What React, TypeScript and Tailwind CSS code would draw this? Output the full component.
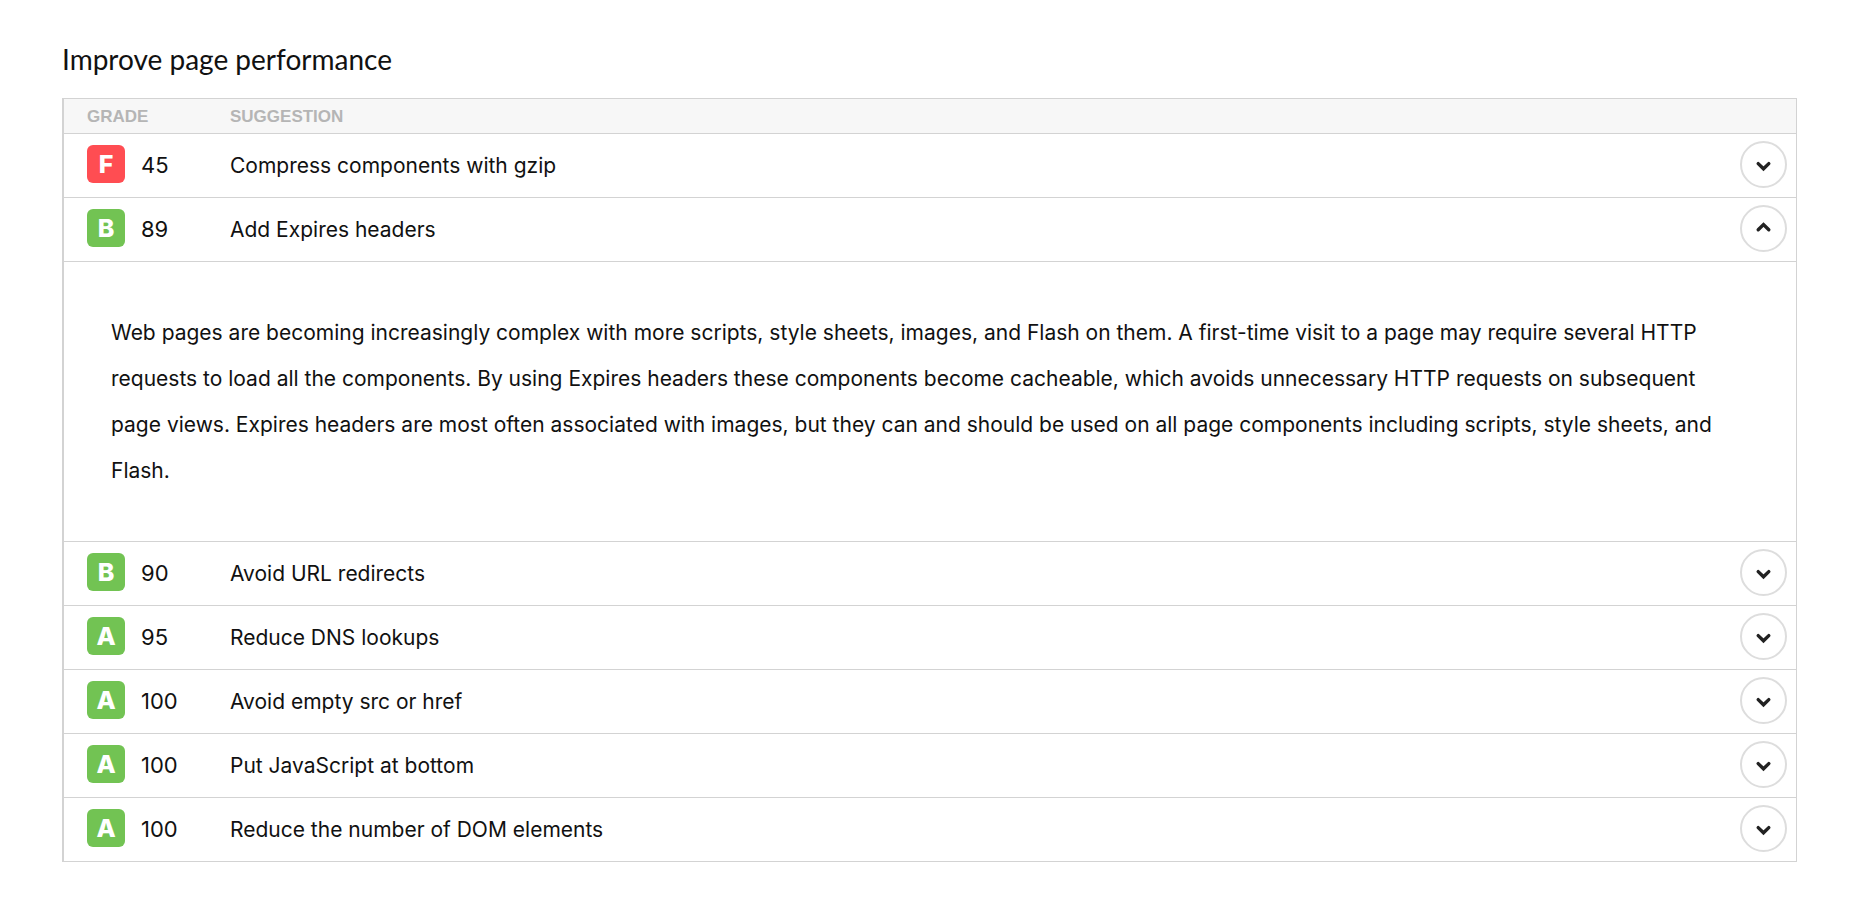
import { Fragment, useState } from "react";

const suggestions = [
  { grade: "F", score: 45, title: "Compress components with gzip" },
  {
    grade: "B",
    score: 89,
    title: "Add Expires headers",
    details:
      "Web pages are becoming increasingly complex with more scripts, style sheets, images, and Flash on them. A first-time visit to a page may require several HTTP requests to load all the components. By using Expires headers these components become cacheable, which avoids unnecessary HTTP requests on subsequent page views. Expires headers are most often associated with images, but they can and should be used on all page components including scripts, style sheets, and Flash.",
  },
  { grade: "B", score: 90, title: "Avoid URL redirects" },
  { grade: "A", score: 95, title: "Reduce DNS lookups" },
  { grade: "A", score: 100, title: "Avoid empty src or href" },
  { grade: "A", score: 100, title: "Put JavaScript at bottom" },
  { grade: "A", score: 100, title: "Reduce the number of DOM elements" },
];

function Chevron({ up }: { up: boolean }) {
  return (
    <svg
      className="size-5"
      viewBox="0 0 20 20"
      fill="none"
      stroke="#222222"
      strokeWidth="3.4"
      strokeLinecap="round"
      aria-hidden
    >
      <path d={up ? "M4.2 10.8 L9.5 5.6 L14.8 10.8" : "M4.2 8.6 L9.5 13.8 L14.8 8.6"} />
    </svg>
  );
}

function GradeBadge({ grade }: { grade: string }) {
  return (
    <span
      className={`flex size-[38px] items-center justify-center rounded-md pt-0.5 text-[25px] font-extrabold leading-none text-white ${
        grade === "F" ? "bg-[#ff4d52]" : "bg-[#72c353]"
      }`}
    >
      {grade}
    </span>
  );
}

export default function App() {
  const [openRow, setOpenRow] = useState<number | null>(1);

  return (
    <main className="min-h-screen bg-white pt-[39px] pr-[53px] pb-12 pl-[62px] font-['Inter',sans-serif] text-[#111111]">
      <h1 className="font-['Lato',sans-serif] text-[28px] leading-10">Improve page performance</h1>

      <table className="mt-[19px] w-full border-separate border-spacing-0 border-t border-r border-l-2 border-[#d3d3d3] text-left">
        <thead>
          <tr className="bg-[#f7f7f7] font-['Liberation_Sans',sans-serif] text-[17px] leading-none text-[#b5b5b5]">
            <th scope="col" className="h-[35px] w-[166px] border-b border-[#d3d3d3] pl-[23px] font-bold">
              GRADE
            </th>
            <th scope="col" colSpan={2} className="border-b border-[#d3d3d3] font-bold">
              SUGGESTION
            </th>
          </tr>
        </thead>
        <tbody>
          {suggestions.map((item, index) => {
            const open = openRow === index;
            return (
              <Fragment key={item.title}>
                <tr>
                  <td className="h-16 border-b border-[#d3d3d3] pb-1 pl-[23px]">
                    <div className="flex items-baseline gap-4">
                      <GradeBadge grade={item.grade} />
                      <span className="text-[22px]">{item.score}</span>
                    </div>
                  </td>
                  <td className="border-b border-[#d3d3d3] text-[21px]">{item.title}</td>
                  <td className="w-14 border-b border-[#d3d3d3] pb-0.5">
                    <button
                      type="button"
                      aria-expanded={open}
                      aria-label={`Toggle ${item.title}`}
                      onClick={() => setOpenRow(open ? null : index)}
                      className="flex size-[47px] items-center justify-center rounded-full border-2 border-[#dddddd]"
                    >
                      <Chevron up={open} />
                    </button>
                  </td>
                </tr>
                {open && item.details && (
                  <tr>
                    <td colSpan={3} className="border-b border-[#d3d3d3] px-[47px] pt-12 pb-[47px]">
                      <p className="text-[21px] leading-[46px]">{item.details}</p>
                    </td>
                  </tr>
                )}
              </Fragment>
            );
          })}
        </tbody>
      </table>
    </main>
  );
}
